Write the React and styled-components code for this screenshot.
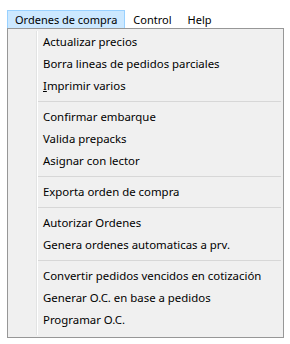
import styled, { createGlobalStyle } from "styled-components";

const Global = createGlobalStyle`
  html, body {
    margin: 0;
    background: #ffffff;
    font-family: "Noto Sans", "DejaVu Sans", sans-serif;
    font-size: 11.4px;
    color: #000000;
  }
`;

const Page = styled.div`
  width: 290px;
  height: 344px;
  padding: 10px 0 0 7px;
  box-sizing: border-box;
  background: #ffffff;
`;

const MenuBar = styled.div`
  display: flex;
  height: 18px;
  align-items: stretch;
  font-size: 11px;
`;

const BarItem = styled.div`
  display: flex;
  align-items: center;
  padding: 0 7px;
  box-sizing: border-box;
  background: ${(p) => (p.$open ? "#cce8ff" : "transparent")};
  border: 1px solid ${(p) => (p.$open ? "#99d1ff" : "transparent")};
  border-bottom: none;
  line-height: 16px;
  white-space: nowrap;
`;

const Dropdown = styled.div`
  width: 277px;
  height: 310px;
  box-sizing: border-box;
  border: 1px solid #979797;
  background: #f0f0f0;
  padding: 2px;
`;

const List = styled.div`
  display: flex;
  flex-direction: column;
  height: 100%;
  background: linear-gradient(to right, transparent 26px, #e2e3e3 26px, #e2e3e3 27px, #ffffff 27px, #ffffff 28px, transparent 28px);
`;

const Item = styled.div`
  height: 22px;
  line-height: 22px;
  padding-left: 33px;
  white-space: nowrap;
`;

const Separator = styled.div`
  height: 9px;
  display: flex;
  align-items: center;
  padding-left: 28px;
  &::after {
    content: "";
    flex: 1;
    height: 1px;
    background: #d7d7d7;
  }
`;

const Key = styled.span`
  text-decoration: underline;
`;

const groups = [
  ["Actualizar precios", "Borra lineas de pedidos parciales", "imprimir"],
  ["Confirmar embarque", "Valida prepacks", "Asignar con lector"],
  ["Exporta orden de compra"],
  ["Autorizar Ordenes", "Genera ordenes automaticas a prv."],
  ["Convertir pedidos vencidos en cotización", "Generar O.C. en base a pedidos", "Programar O.C."],
];

export default function App() {
  return (
    <Page>
      <Global />
      <MenuBar>
        <BarItem $open>Ordenes de compra</BarItem>
        <BarItem>Control</BarItem>
        <BarItem>Help</BarItem>
      </MenuBar>
      <Dropdown>
        <List>
          {groups.map((g, gi) => (
            <div key={gi}>
              {gi > 0 && <Separator />}
              {g.map((label) =>
                label === "imprimir" ? (
                  <Item key={label}>
                    <Key>I</Key>mprimir varios
                  </Item>
                ) : (
                  <Item key={label}>{label}</Item>
                )
              )}
            </div>
          ))}
        </List>
      </Dropdown>
    </Page>
  );
}
